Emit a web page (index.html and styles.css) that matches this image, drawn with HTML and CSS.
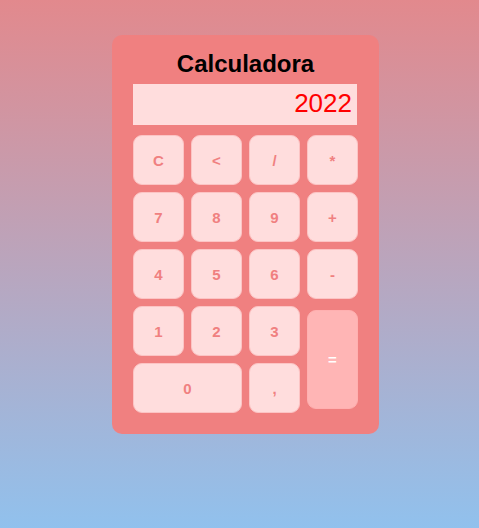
FILE: index.html
```html
<!DOCTYPE html>
<html lang="es">
<head>
<meta charset="utf-8">
<title>Calculadora</title>
<link rel="stylesheet" href="styles.css">
</head>
<body>
  <div class="calc">
    <h1 class="title">Calculadora</h1>
    <div class="display">2022</div>
    <div class="keys">
      <button class="key">C</button>
      <button class="key">&lt;</button>
      <button class="key">/</button>
      <button class="key">*</button>
      <button class="key">7</button>
      <button class="key">8</button>
      <button class="key">9</button>
      <button class="key">+</button>
      <button class="key">4</button>
      <button class="key">5</button>
      <button class="key">6</button>
      <button class="key">-</button>
      <button class="key">1</button>
      <button class="key">2</button>
      <button class="key">3</button>
      <button class="key key-equals">=</button>
      <button class="key key-zero">0</button>
      <button class="key key-comma">,</button>
    </div>
  </div>
</body>
</html>
```
FILE: styles.css
```css
* { box-sizing: border-box; }
html, body { margin: 0; padding: 0; }
body {
  min-height: 100vh;
  background: linear-gradient(to bottom, #e2898d 0%, #91c1ed 100%);
  font-family: "Liberation Sans", Arial, sans-serif;
  display: flex;
  justify-content: center;
  align-items: flex-start;
  padding-top: 35px;
  padding-left: 12px;
}
.calc {
  width: 267px;
  background: #f08080;
  border-radius: 10px;
  padding: 15px 21px 21px 21px;
  display: flex;
  flex-direction: column;
}
.title {
  margin: 0;
  font-size: 24px;
  line-height: 28px;
  font-weight: bold;
  text-align: center;
  color: #000;
  margin-bottom: 6px;
}
.display {
  height: 41px;
  width: 224px;
  background: #ffdddd;
  color: #ff0000;
  font-size: 26px;
  line-height: 38px;
  padding: 0 5px 3px 0;
  text-align: right;
}
.keys {
  margin-top: 10px;
  display: grid;
  grid-template-columns: repeat(4, 51px);
  grid-template-rows: repeat(5, 50px);
  gap: 7px;
}
.key {
  margin: 0;
  border: 1px solid #fcc4c4;
  border-radius: 9px;
  background: #ffdddd;
  color: #f08080;
  font-family: "Liberation Sans", Arial, sans-serif;
  font-size: 15px;
  font-weight: bold;
  padding: 0;
}
.key-zero { grid-column: 1 / 3; grid-row: 5; }
.key-comma { grid-column: 3; grid-row: 5; }
.key-equals {
  grid-column: 4;
  grid-row: 4 / 6;
  align-self: center;
  height: 99px;
  background: #ffb5b5;
  color: #ffffff;
  border-color: #ffb0b0;
}
```
